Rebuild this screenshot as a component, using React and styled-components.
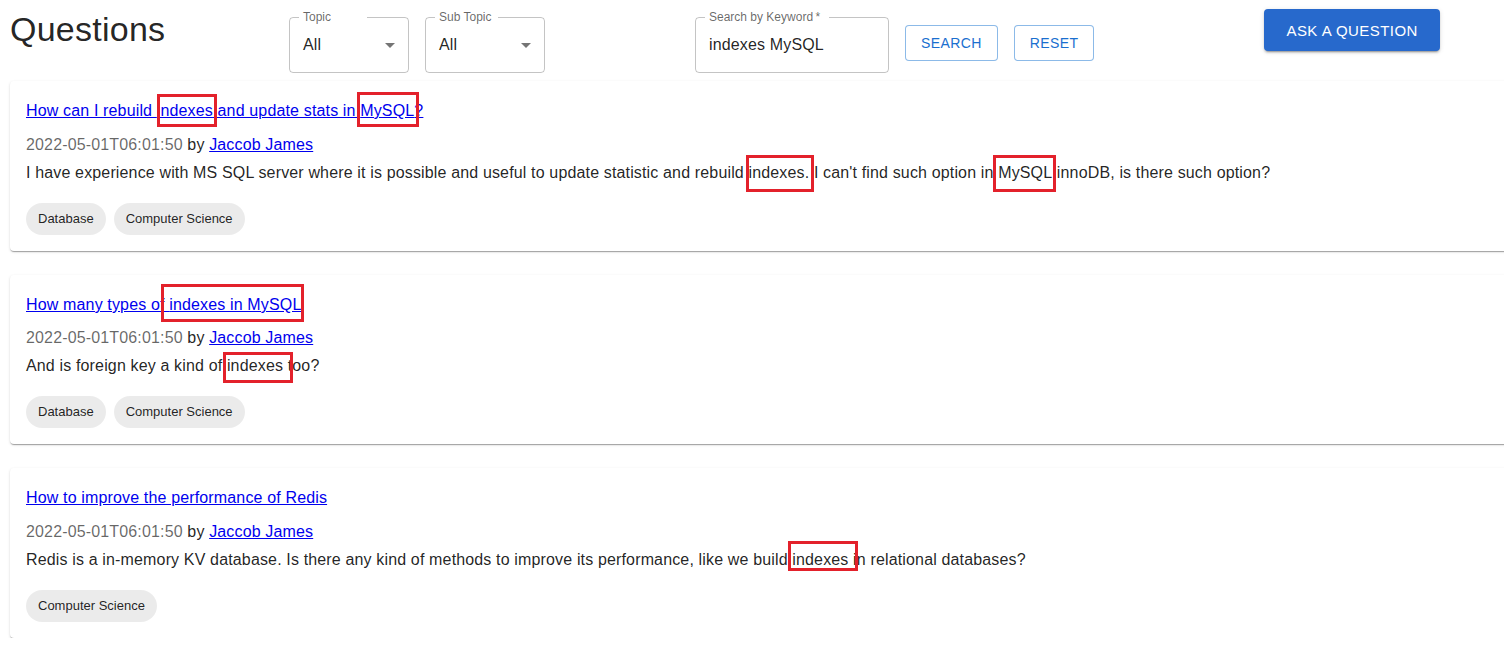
import React from "react";
import styled, { createGlobalStyle } from "styled-components";

const GlobalStyle = createGlobalStyle`
  html, body { margin: 0; padding: 0; background: #fff; }
  body {
    font-family: "Liberation Sans", Arial, Helvetica, sans-serif;
    color: rgba(0, 0, 0, 0.87);
    overflow: hidden;
    width: 1504px;
  }
  *, *::before, *::after { box-sizing: border-box; }
`;

const Page = styled.div`
  display: flex;
  flex-direction: column;
`;

const Header = styled.header`
  display: flex;
  align-items: flex-start;
  height: 81px;
  padding-left: 10px;
`;

const Title = styled.h1`
  flex: 0 0 279px;
  margin: 8px 0 0;
  font-size: 34px;
  font-weight: 400;
  line-height: 42px;
  letter-spacing: 0.25px;
`;

const Group = styled.div`
  display: flex;
  align-items: flex-start;
  gap: 16px;
  margin-left: ${(p) => p.$ml || 0}px;
`;

const Field = styled.div`
  position: relative;
  width: ${(p) => p.$w}px;
  height: 56px;
  margin-top: 17px;
  border: 1px solid rgba(0, 0, 0, 0.23);
  border-radius: 4px;
  display: flex;
  align-items: center;
  padding: 0 13px;
`;

const FieldLabel = styled.span`
  position: absolute;
  top: -9px;
  left: 9px;
  width: ${(p) => p.$notch}px;
  height: 16px;
  padding-left: 4px;
  background: #fff;
  font-size: 12px;
  line-height: 16px;
  color: rgba(0, 0, 0, 0.6);
  white-space: nowrap;
`;

const Value = styled.span`
  font-size: 16px;
  letter-spacing: 0.15px;
  color: rgba(0, 0, 0, 0.87);
  flex: 1;
`;

const Arrow = styled.svg`
  width: 24px;
  height: 24px;
  margin-right: -7px;
  fill: rgba(0, 0, 0, 0.54);
`;

const OutlineButton = styled.button`
  margin-top: 25px;
  height: 36px;
  padding: 0 15px;
  border: 1px solid rgba(25, 118, 210, 0.5);
  border-radius: 4px;
  background: #fff;
  color: #1a6fcf;
  font-family: inherit;
  font-size: 14px;
  letter-spacing: 0.4px;
  text-transform: uppercase;
  cursor: pointer;
`;

const ContainedButton = styled.button`
  margin: 9px 0 0 ${(p) => p.$ml}px;
  height: 42px;
  padding: 0 22px;
  border: none;
  border-radius: 4px;
  background: #2769cc;
  color: #fff;
  font-family: inherit;
  font-size: 15px;
  letter-spacing: 0.46px;
  text-transform: uppercase;
  box-shadow: 0px 3px 1px -2px rgba(0, 0, 0, 0.2), 0px 2px 2px 0px rgba(0, 0, 0, 0.14),
    0px 1px 5px 0px rgba(0, 0, 0, 0.12);
  cursor: pointer;
`;

const List = styled.div`
  display: flex;
  flex-direction: column;
  gap: 24px;
  margin: 0 -40px 0 10px;
`;

const Card = styled.article`
  background: #fff;
  border-radius: 4px;
  box-shadow: 0px 2px 1px -1px rgba(0, 0, 0, 0.2), 0px 1px 1px 0px rgba(0, 0, 0, 0.14),
    0px 1px 3px 0px rgba(0, 0, 0, 0.12);
  padding: 18px 16px 16px;
  display: flex;
  flex-direction: column;
`;

const Line = styled.div`
  font-size: 16px;
  line-height: 24px;
  letter-spacing: 0.15px;
  margin-bottom: ${(p) => p.$mb || 0}px;
  white-space: nowrap;
`;

const Link = styled.a`
  color: #0000ee;
  text-decoration: underline;
  cursor: pointer;
`;

const Muted = styled.span`
  color: rgba(0, 0, 0, 0.6);
`;

const Mark = styled.span`
  position: relative;
  &::after {
    content: "";
    position: absolute;
    left: ${(p) => p.$box[0]}px;
    top: ${(p) => p.$box[1]}px;
    width: ${(p) => p.$box[2]}px;
    height: ${(p) => p.$box[3]}px;
    border: 3px solid #e3212b;
    pointer-events: none;
  }
`;

const Chips = styled.div`
  display: flex;
  gap: 8px;
  margin-top: 18px;
`;

const Chip = styled.span`
  height: 32px;
  padding: 0 12px;
  border-radius: 16px;
  background: rgba(0, 0, 0, 0.08);
  font-size: 13px;
  line-height: 32px;
  color: rgba(0, 0, 0, 0.87);
`;

const questions = [
  {
    titleGap: 10,
    title: [
      "How can I rebuild ",
      { m: "indexes", box: [0, -8, 60, 33] },
      " and update stats in ",
      { m: "MySQL", box: [-3, -10, 62, 35] },
      "?",
    ],
    body: [
      "I have experience with MS SQL server where it is possible and useful to update statistic and rebuild ",
      { m: "indexes.", box: [-3, -9, 68, 37] },
      " I can't find such option in ",
      { m: "MySQL", box: [-5, -9, 63, 37] },
      " innoDB, is there such option?",
    ],
    tags: ["Database", "Computer Science"],
  },
  {
    titleGap: 9,
    title: ["How many types of ", { m: "indexes in MySQL", box: [-8, -12, 143, 38] }],
    body: ["And is foreign key a kind of ", { m: "indexes", box: [-4, -5, 70, 31] }, " too?"],
    tags: ["Database", "Computer Science"],
  },
  {
    titleGap: 10,
    title: ["How to improve the performance of Redis"],
    body: [
      "Redis is a in-memory KV database. Is there any kind of methods to improve its performance, like we build ",
      { m: "indexes", box: [-4, -10, 70, 30] },
      " in relational databases?",
    ],
    tags: ["Computer Science"],
  },
];

const renderSegments = (segs) =>
  segs.map((s, i) =>
    typeof s === "string" ? (
      <React.Fragment key={i}>{s}</React.Fragment>
    ) : (
      <Mark key={i} $box={s.box}>
        {s.m}
      </Mark>
    )
  );

const SelectField = ({ label, notch, width }) => (
  <Field $w={width}>
    <FieldLabel $notch={notch}>{label}</FieldLabel>
    <Value>All</Value>
    <Arrow viewBox="0 0 24 24">
      <path d="M7 10l5 5 5-5z" />
    </Arrow>
  </Field>
);

export default function App() {
  return (
    <>
      <GlobalStyle />
      <Page>
        <Header>
          <Title>Questions</Title>
          <Group>
            <SelectField label="Topic" notch={68} width={120} />
            <SelectField label="Sub Topic" notch={63} width={120} />
          </Group>
          <Group $ml={150}>
            <Field $w={194}>
              <FieldLabel $notch={124}>Search by Keyword&thinsp;*</FieldLabel>
              <Value>indexes MySQL</Value>
            </Field>
            <OutlineButton>Search</OutlineButton>
            <OutlineButton>Reset</OutlineButton>
          </Group>
          <ContainedButton $ml={170}>Ask a question</ContainedButton>
        </Header>
        <List>
          {questions.map((q, i) => (
            <Card key={i}>
              <Line $mb={q.titleGap}>
                <Link>{renderSegments(q.title)}</Link>
              </Line>
              <Line $mb={4}>
                <Muted>2022-05-01T06:01:50</Muted> by <Link>Jaccob James</Link>
              </Line>
              <Line>{renderSegments(q.body)}</Line>
              <Chips>
                {q.tags.map((t) => (
                  <Chip key={t}>{t}</Chip>
                ))}
              </Chips>
            </Card>
          ))}
        </List>
      </Page>
    </>
  );
}
